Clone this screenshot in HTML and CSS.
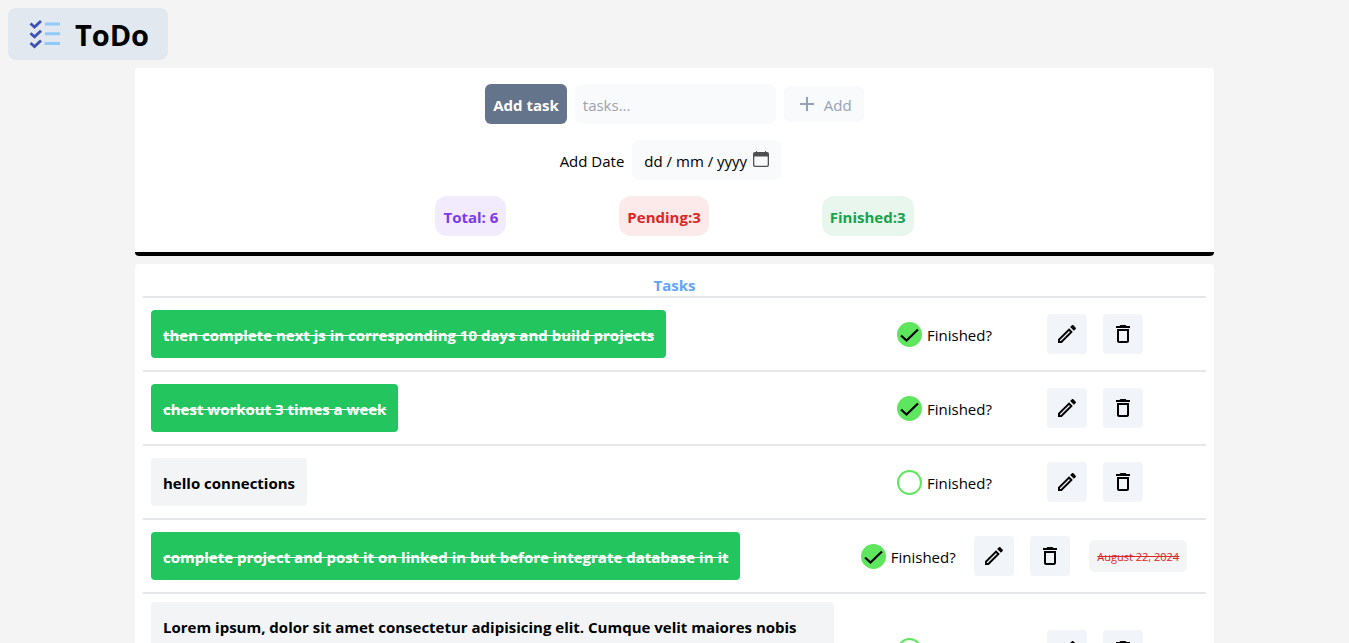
FILE: index.html
```html
<!DOCTYPE html>
<html lang="en">
<head>
<meta charset="utf-8">
<meta name="viewport" content="width=device-width, initial-scale=1">
<title>ToDo</title>
<link rel="stylesheet" href="styles.css">
</head>
<body>
<svg class="sprite" aria-hidden="true">
  <symbol id="pencil" viewBox="0 0 24 24"><path d="m14.06 9.02.92.92L5.92 19H5v-.92l9.06-9.06M17.66 3c-.25 0-.51.1-.7.29l-1.83 1.83 3.75 3.75 1.83-1.83c.39-.39.39-1.02 0-1.41l-2.34-2.34c-.2-.2-.45-.29-.71-.29zm-3.6 3.19L3 17.25V21h3.75L17.81 9.94l-3.75-3.75z"/></symbol>
  <symbol id="trash" viewBox="0 0 24 24"><path d="M16 9v10H8V9h8m-1.5-6h-5l-1 1H5v2h14V4h-3.500l-1-1zM18 7H6v12c0 1.100.9 2 2 2h8c1.100 0 2-.9 2-2V7z"/></symbol>
</svg>
<header class="brand">
  <svg class="brand-icon" viewBox="0 0 32 32" aria-hidden="true">
    <path d="M16 6H31M16 15.800H31M15.500 25.500H31" stroke="#90caf9" stroke-width="3" fill="none"/>
    <path d="M1.500 5.500l4 3.500L12 3M1.500 15.300l4 3.500L12 12.800M1.500 25l4 3.500L12 22.500" stroke="#3f51b5" stroke-width="2.800" fill="none"/>
  </svg>
  <h1 class="brand-name">ToDo</h1>
</header>
<main class="page">
  <section class="card composer">
    <form class="form-row">
      <label class="task-label" for="task">Add task</label>
      <input class="task-input" id="task" type="text" placeholder="tasks...">
      <button class="add-button" type="button" disabled>
        <svg class="add-icon" viewBox="0 0 14 14" aria-hidden="true"><path d="M0 6h6V0h2v6h6v2H8v6H6V8H0z"/></svg>
        Add
      </button>
    </form>
    <div class="form-row date-row">
      <label class="date-label" for="date">Add Date</label>
      <div class="date-field">
        <input class="date-input" id="date" type="text" placeholder="dd / mm / yyyy">
        <button class="date-button" type="button" aria-label="Choose date">
          <svg class="calendar-icon" viewBox="0 0 16 16" aria-hidden="true"><path fill-rule="evenodd" d="M3 0h1v1h8V0h1v1h1a2 2 0 0 1 2 2v11a2 2 0 0 1-2 2H2a2 2 0 0 1-2-2V3a2 2 0 0 1 2-2h1zM1.300 5.500v8.200a1 1 0 0 0 1 1h11.400a1 1 0 0 0 1-1V5.500z"/></svg>
        </button>
      </div>
    </div>
    <div class="stats">
      <span class="stat total">Total: 6</span>
      <span class="stat pending">Pending:3</span>
      <span class="stat finished">Finished:3</span>
    </div>
  </section>
  <section class="card tasks">
    <h2 class="tasks-title">Tasks</h2>
    <ul class="task-list">
      <li class="task">
        <p class="task-text done">then complete next js in corresponding 10 days and build projects</p>
        <div class="actions">
          <label class="finish"><input class="check" type="checkbox" checked><span class="finish-text">Finished?</span></label>
          <div class="buttons">
            <button class="icon-button" type="button" aria-label="Edit"><svg class="icon"><use href="#pencil"/></svg></button>
            <button class="icon-button" type="button" aria-label="Delete"><svg class="icon"><use href="#trash"/></svg></button>
          </div>
        </div>
      </li>
      <li class="task">
        <p class="task-text done">chest workout 3 times a week</p>
        <div class="actions">
          <label class="finish"><input class="check" type="checkbox" checked><span class="finish-text">Finished?</span></label>
          <div class="buttons">
            <button class="icon-button" type="button" aria-label="Edit"><svg class="icon"><use href="#pencil"/></svg></button>
            <button class="icon-button" type="button" aria-label="Delete"><svg class="icon"><use href="#trash"/></svg></button>
          </div>
        </div>
      </li>
      <li class="task">
        <p class="task-text">hello connections</p>
        <div class="actions">
          <label class="finish"><input class="check" type="checkbox"><span class="finish-text">Finished?</span></label>
          <div class="buttons">
            <button class="icon-button" type="button" aria-label="Edit"><svg class="icon"><use href="#pencil"/></svg></button>
            <button class="icon-button" type="button" aria-label="Delete"><svg class="icon"><use href="#trash"/></svg></button>
          </div>
        </div>
      </li>
      <li class="task">
        <p class="task-text done">complete project and post it on linked in but before integrate database in it</p>
        <div class="actions">
          <label class="finish"><input class="check" type="checkbox" checked><span class="finish-text">Finished?</span></label>
          <div class="buttons">
            <button class="icon-button" type="button" aria-label="Edit"><svg class="icon"><use href="#pencil"/></svg></button>
            <button class="icon-button" type="button" aria-label="Delete"><svg class="icon"><use href="#trash"/></svg></button>
          </div>
          <span class="due">August 22, 2024</span>
        </div>
      </li>
      <li class="task">
        <p class="task-text">Lorem ipsum, dolor sit amet consectetur adipisicing elit. Cumque velit maiores nobis voluptatibus, dolor sit amet consectetur adipisicing elit. Cumque velit maiores nobis lorem ipsum dolor sit amet consectetur adipisicing elit.</p>
        <div class="actions">
          <label class="finish"><input class="check" type="checkbox"><span class="finish-text">Finished?</span></label>
          <div class="buttons">
            <button class="icon-button" type="button" aria-label="Edit"><svg class="icon"><use href="#pencil"/></svg></button>
            <button class="icon-button" type="button" aria-label="Delete"><svg class="icon"><use href="#trash"/></svg></button>
          </div>
        </div>
      </li>
    </ul>
  </section>
</main>
</body>
</html>
```
FILE: styles.css
```css
*, *::before, *::after { box-sizing: border-box; }
body {
  margin: 0;
  padding: 8px;
  background: #f4f4f4;
  color: #000;
  font-family: "Segoe UI", "Open Sans", "Noto Sans", sans-serif;
  font-size: 15px;
  line-height: 24px;
}
h1, h2, p, ul { margin: 0; padding: 0; }
button, input { font: inherit; border: 0; margin: 0; padding: 0; }
button { cursor: pointer; }
.sprite { display: none; }

.brand {
  display: flex;
  align-items: center;
  justify-content: center;
  gap: 14px;
  width: 160px;
  height: 52px;
  padding-left: 2px;
  border-radius: 8px;
  background: #e2e8f0;
}
.brand-icon { width: 32px; height: 32px; }
.brand-name { padding-top: 2px; font-size: 29px; line-height: 36px; font-weight: 700; }

.page { width: 81%; max-width: 1079px; margin: 8px auto 0; }
.card { border-radius: 4px; background: #fff; }
.composer {
  display: flex;
  flex-direction: column;
  gap: 16px;
  padding: 16px 8px;
  border-bottom: 4px solid #000;
}
.form-row { display: flex; align-items: center; justify-content: center; gap: 8px; }
.date-row { padding-right: 8px; }
.task-label {
  padding: 9px 8px 7px;
  border-radius: 6px;
  background: #64748b;
  color: #fff;
  font-weight: 700;
}
.task-input {
  width: 201px;
  padding: 9px 8px 7px;
  border-radius: 6px;
  background: #f8fafc;
}
.task-input::placeholder { color: #9ca3af; opacity: 1; }
.add-button {
  display: flex;
  align-items: center;
  justify-content: center;
  gap: 10px;
  width: 80px;
  height: 36px;
  padding: 2px 0 0 4px;
  border-radius: 6px;
  background: #f8fafc;
  color: #94a3b8;
  cursor: default;
}
.add-icon { width: 14px; height: 14px; margin-bottom: 2px; fill: #94a3b8; }
.date-label { padding-top: 2px; }
.date-field {
  display: flex;
  align-items: center;
  justify-content: space-between;
  width: 149px;
  height: 40px;
  padding: 0 12px 2px;
  border-radius: 6px;
  background: #f8fafc;
}
.date-input { width: 106px; padding-top: 4px; background: transparent; }
.date-input::placeholder { color: #000; opacity: 1; }
.date-button { display: flex; background: transparent; }
.calendar-icon { width: 16px; height: 16px; fill: #505050; }

.stats { display: flex; justify-content: center; gap: 113px; }
.stat { padding: 9px 8px 7px; border-radius: 12px; font-weight: 700; }
.total { background: #f2eafd; color: #7c3aed; }
.pending { background: #fce9e9; color: #dc2626; }
.finished { background: #e8f6ed; color: #16a34a; }

.tasks { margin-top: 8px; padding: 8px; }
.tasks-title {
  padding-top: 2px;
  color: #60a5fa;
  font-size: 15px;
  line-height: 22px;
  text-align: center;
}
.task-list { list-style: none; }
.task {
  display: grid;
  grid-template-columns: 13fr 7fr;
  align-items: center;
  min-height: 74px;
  padding: 8px 0;
  border-top: 2px solid #e5e7eb;
}
.task-text {
  justify-self: start;
  margin-left: 8px;
  padding: 13px 12px 11px;
  border-radius: 4px;
  background: #f3f4f6;
  font-weight: 700;
}
.done { background: #22c55e; color: #fff; text-decoration: line-through; }
.actions { display: flex; align-items: center; justify-content: space-evenly; }
.finish { display: flex; align-items: center; gap: 5px; margin-left: 8px; }
.finish-text { padding-top: 2px; }
.check {
  appearance: none;
  width: 25px;
  height: 25px;
  border: 2px solid #5ee65e;
  border-radius: 50%;
}
.check:checked {
  background: #5ee65e url("data:image/svg+xml,%3Csvg xmlns='http://www.w3.org/2000/svg' viewBox='0 0 25 25'%3E%3Cpath d='M4 13.500l5.500 5L21 7.500' fill='none' stroke='%23000' stroke-width='2.200'/%3E%3C/svg%3E") center / 25px 25px no-repeat;
}
.buttons { display: flex; gap: 16px; }
.buttons:last-child { margin-right: 8px; }
.icon-button {
  display: flex;
  align-items: center;
  justify-content: center;
  width: 40px;
  height: 40px;
  border-radius: 4px;
  background: #f1f5f9;
}
.icon { width: 24px; height: 24px; }
.due {
  padding: 9px 8px 7px;
  border-radius: 6px;
  background: #f3f4f6;
  color: #dc2626;
  font-size: 11px;
  line-height: 16px;
  white-space: nowrap;
  text-decoration: line-through;
}
```
